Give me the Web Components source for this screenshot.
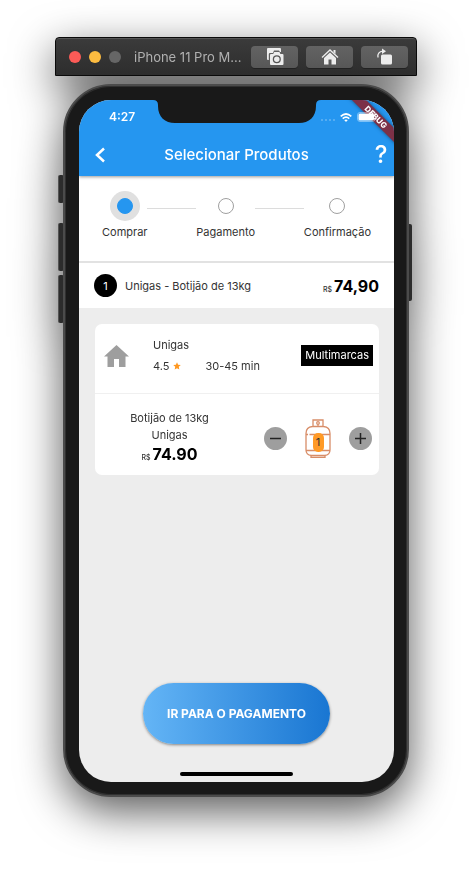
<!DOCTYPE html>
<html lang="pt-BR">
<head>
<meta charset="utf-8">
<meta name="viewport" content="width=device-width, initial-scale=1">
<title>Selecionar Produtos</title>
<style>
  body { margin: 0; background: #fff; font-family: Inter, Roboto, "Liberation Sans", sans-serif; font-size: 11px; line-height: 16px; color: #333; }
</style>
</head>
<body>
<sim-stage>
  <sim-toolbar>iPhone 11 Pro M...
    <sim-button slot="actions" label="Captura de tela"><svg width="18" height="18" viewBox="0 0 18 18"><path fill="#ececec" d="M2 0h12q1 0 1 1v3l-1 0-1-1.500H8L7 5H4q-1.200 0-1.200 1.200V12H2q-1 0-1-1V1q0-1 1-1z"/><path fill="#ececec" d="M5 6h2.200l1-2h5.200l1 2H16.500q1 0 1 1v9q0 1-1 1H5q-1 0-1-1V7q0-1 1-1z"/><circle cx="10.800" cy="11.300" r="3.400" fill="#ececec" stroke="#555" stroke-width="1.300"/></svg></sim-button>
    <sim-button slot="actions" label="Início"><svg width="18" height="18" viewBox="0 0 18 18"><path fill="none" stroke="#ececec" stroke-width="1.300" d="M1 9.500 9 2l8 7.500"/><path fill="#ececec" d="M12.500 2h2v4l-2-2zM9 4.500l6 5.500V16.500H10.500V11.500h-3v5H3V10z"/></svg></sim-button>
    <sim-button slot="actions" label="Girar"><svg width="18" height="18" viewBox="0 0 18 18"><rect x="5" y="6.500" width="11" height="10" rx="1.500" fill="#ececec"/><path fill="none" stroke="#ececec" stroke-width="1.300" d="M2 9.500Q1 4 7 3.200"/><path fill="#ececec" d="M6 .500 10 3.200 6 6z"/></svg></sim-button>
  </sim-toolbar>
  <phone-frame>
    <header-area>
      <status-bar>4:27</status-bar>
      <app-bar>Selecionar Produtos</app-bar>
    </header-area>
    <step-bar>
      <step-item active>Comprar</step-item>
      <step-line></step-line>
      <step-item>Pagamento</step-item>
      <step-line></step-line>
      <step-item>Confirmação</step-item>
    </step-bar>
    <order-line count="1">Unigas - Botijão de 13kg<price-tag slot="price">74,90</price-tag></order-line>
    <vendor-card>
      <vendor-head rating="4.5" time="30-45 min" tag="Multimarcas">Unigas</vendor-head>
      <vendor-product brand="Unigas">Botijão de 13kg
        <price-tag slot="price">74.90</price-tag>
        <quantity-picker slot="quantity" value="1"></quantity-picker>
      </vendor-product>
    </vendor-card>
    <checkout-button>IR PARA O PAGAMENTO</checkout-button>
    <home-indicator></home-indicator>
  </phone-frame>
</sim-stage>

<script>
const define = (name, markup) => {
  customElements.define(name, class extends HTMLElement {
    constructor() {
      super();
      const t = document.createElement('template');
      t.innerHTML = '<style>*{box-sizing:border-box}:host{box-sizing:border-box}button{font:inherit;border:0;padding:0;margin:0;background:none;cursor:pointer}svg{display:block}</style>' + markup;
      this.attachShadow({ mode: 'open' }).append(t.content.cloneNode(true));
    }
    connectedCallback() {
      this.shadowRoot.querySelectorAll('[data-text]').forEach(n => { n.textContent = this.getAttribute(n.dataset.text); });
      this.shadowRoot.querySelectorAll('[data-label]').forEach(n => n.setAttribute('aria-label', this.getAttribute(n.dataset.label)));
    }
  });
};

define('sim-stage', `<style>
  :host { display: flex; flex-direction: column; gap: 8px; min-height: 100vh; padding: 37px 55px 74px; overflow: hidden; filter: drop-shadow(0 14px 22px rgba(0,0,0,.66)); }
</style><slot></slot>`);

define('sim-toolbar', `<style>
  :host { display: flex; align-items: center; height: 39px; padding: 0 8px 0 13px; border: 1px solid #0a0a0a; border-radius: 4px 4px 0 0; background: linear-gradient(#3b3b3b, #2d2d2d); box-shadow: inset 0 1px #555; color: #b0b0b0; font-size: 13px; }
  .lights { display: flex; gap: 8px; margin-right: 13px; }
  .lights i { width: 12px; height: 12px; border-radius: 50%; background: #666; }
  .lights i:nth-child(1) { background: #fc5b57; }
  .lights i:nth-child(2) { background: #fdbc40; }
  .title { flex: 1; white-space: nowrap; }
  .actions { display: flex; gap: 8px; }
</style><div class="lights"><i></i><i></i><i></i></div><div class="title"><slot></slot></div><div class="actions"><slot name="actions"></slot></div>`);

define('sim-button', `<style>
  button { display: grid; place-items: center; width: 47px; height: 22px; border-radius: 4px; background: linear-gradient(#636363, #575757); box-shadow: 0 1px #222; }
</style><button data-label="label"><slot></slot></button>`);

define('phone-frame', `<style>
  :host { position: relative; display: flex; flex: 1; flex-direction: column; margin: 0 8px; padding: 14px 13px 13px 14px; border: 2px solid #4b4b4b; border-radius: 48px; background: #191919; box-shadow: inset 0 0 0 1px #303030; }
  .screen { position: relative; display: flex; flex: 1; flex-direction: column; overflow: hidden; border-radius: 32px; background: #ededed; }
  .key { position: absolute; width: 6px; background: #2c2c2c; border-left: 1px solid #555; border-radius: 2px; left: -7px; z-index: -1; }
  .mute { top: 89px; height: 28px; }
  .up { top: 137px; height: 48px; }
  .down { top: 189px; height: 48px; }
  .power { left: auto; right: -5px; top: 138px; height: 77px; }
</style><i class="key mute"></i><i class="key up"></i><i class="key down"></i><i class="key power"></i><main class="screen"><slot></slot></main>`);

define('header-area', `<style>
  :host { display: block; position: relative; z-index: 1; background: #2596f0; color: #fff; box-shadow: 0 1px 3px rgba(0,0,0,.4); }
</style><slot></slot>`);

define('status-bar', `<style>
  :host { position: relative; display: flex; align-items: center; justify-content: space-between; height: 34px; padding: 0 17px 0 30px; font-size: 12px; font-weight: 600; }
  .notch { position: absolute; top: 0; left: 50%; margin-left: -84px; }
  .ribbon { position: absolute; right: -42px; top: 12px; width: 120px; height: 10px; background: #7c3147; box-shadow: 0 0 4px rgba(0,0,0,.5); transform: rotate(45deg); font-size: 8px; font-weight: 800; line-height: 10px; text-align: center; }
  .status { position: relative; display: flex; align-items: center; gap: 5px; }
  .dots { display: flex; gap: 2px; padding-top: 6px; }
  .dots i { width: 2px; height: 2px; border-radius: 50%; background: rgba(255,255,255,.3); }
</style>
<svg class="notch" width="168" height="23" viewBox="0 0 168 23"><path fill="#191919" d="M0 0h168q-5 0-5 5v1c0 11-7 17-17 17H22C12 23 5 17 5 6V5q0-5-5-5z"/></svg>
<slot></slot>
<div class="ribbon">DEBUG</div>
<div class="status"><span class="dots"><i></i><i></i><i></i><i></i></span>
<svg width="12" height="9" viewBox="0 0 12 9"><g fill="none" stroke="#fff" stroke-width="1.700"><path d="M.700 3.300q5.300-4.600 10.600 0M2.700 5.600q3.300-2.800 6.600 0"/></g><path fill="#fff" d="M4.200 7.100q1.800-1.400 3.600 0L6 9z"/></svg>
<svg width="20" height="10" viewBox="0 0 20 10"><rect x=".500" y=".500" width="17.500" height="9" rx="2.500" fill="none" stroke="#fff" stroke-opacity=".4"/><rect x="1.500" y="1.500" width="15.500" height="7" rx="1.500" fill="#fff"/><path fill="#fff" fill-opacity=".5" d="M19 3.500q1 1.500 0 3z"/></svg></div>`);

define('app-bar', `<style>
  :host { display: grid; grid-template-columns: 42px 1fr 42px; align-items: center; height: 42px; font-size: 15px; font-weight: 500; line-height: 20px; text-align: center; }
  button { color: #fff; height: 32px; display: grid; place-items: center; }
  .help { justify-self: end; width: 26px; font-size: 24px; }
  h1 { margin: 0; font: inherit; }
</style><button aria-label="Voltar"><svg width="12" height="16" viewBox="0 0 12 16"><path fill="none" stroke="#fff" stroke-width="2.500" d="M10 1.500 3 8l7 6.500"/></svg></button><h1><slot></slot></h1><button class="help" aria-label="Ajuda">?</button>`);

define('step-bar', `<style>
  :host { display: flex; height: 87px; padding: 15px 23px 0; background: #fff; border-bottom: 2px solid #e2e2e2; }
</style><slot></slot>`);

define('step-item', `<style>
  :host { display: flex; flex-direction: column; align-items: center; gap: 3px; }
  .dot { width: 16px; height: 16px; margin: 7px; border: 1px solid #a0a0a0; border-radius: 50%; }
  :host([active]) .dot { background: #2596f0; border-color: #2596f0; box-shadow: 0 0 0 7px #e0e0e0; }
</style><i class="dot"></i><span><slot></slot></span>`);

define('step-line', `<style>
  :host { flex: 1; height: 1px; margin-top: 17px; background: #dcdcdc; }
</style>`);

define('order-line', `<style>
  :host { display: flex; align-items: center; gap: 8px; height: 45px; padding: 0 15px; background: #fff; }
  .count { display: grid; place-items: center; width: 23px; height: 23px; border-radius: 50%; background: #000; color: #fff; }
  .name { flex: 1; }
</style><span class="count" data-text="count"></span><span class="name"><slot></slot></span><slot name="price"></slot>`);

define('price-tag', `<style>
  :host { display: inline-flex; align-items: baseline; gap: 2px; color: #000; font-size: 16px; font-weight: 700; line-height: 20px; }
  small { color: #333; font-size: 7px; font-weight: 500; line-height: 8px; }
</style><small>R$</small><slot></slot>`);

define('vendor-card', `<style>
  :host { display: block; margin: 16px 15px 0 16px; border-radius: 7px; background: #fff; }
</style><slot></slot>`);

define('vendor-head', `<style>
  :host { display: grid; grid-template-columns: 49px 1fr auto; align-items: center; padding: 13px 6px 19px 9px; border-bottom: 1px solid #f0f0f0; }
  .info { display: grid; gap: 5px; }
  .meta { display: flex; align-items: center; }
  .meta svg { margin: 0 24px 0 4px; }
  .tag { padding: 2px 4px 3px; background: #000; color: #fff; }
</style><svg width="25" height="22" viewBox="0 0 25 22"><path fill="#9e9e9e" d="M12.500 0 25 11.500h-3.500V22H15V14h-5v8H3.500V11.500H0z"/></svg>
<div class="info"><span><slot></slot></span><div class="meta"><span data-text="rating"></span><svg width="8" height="8" viewBox="0 0 24 24"><path fill="#ff9820" d="m12 1 3.300 7.400 8 .800-6 5.400L19 22.500l-7-4.100-7 4.100 1.700-7.900-6-5.400 8-.800z"/></svg><span data-text="time"></span></div></div>
<span class="tag" data-text="tag"></span>`);

define('vendor-product', `<style>
  :host { display: grid; grid-template-columns: 1fr auto; align-items: start; gap: 20px; padding: 16px 7px 11px 0; }
  .info { display: flex; flex-direction: column; align-items: center; gap: 1px; }
</style><div class="info"><span><slot></slot></span><span data-text="brand"></span><slot name="price"></slot></div><slot name="quantity"></slot>`);

define('quantity-picker', `<style>
  :host { display: flex; align-items: center; gap: 18px; padding-top: 9px; }
  button { display: grid; place-items: center; width: 23px; height: 23px; border-radius: 50%; background: #9e9e9e; }
  .tank { display: grid; place-items: center; }
  .tank > * { grid-area: 1 / 1; }
  .value { position: relative; width: 11px; height: 19px; margin-top: 7px; border-radius: 5px; background: #ff9a26; line-height: 19px; text-align: center; }
</style><button aria-label="Diminuir"><svg width="11" height="11" viewBox="0 0 11 11"><path stroke="#222" stroke-width="1.500" d="M0 5.500h11"/></svg></button>
<span class="tank"><svg width="26" height="39" viewBox="0 0 26 39"><g fill="none" stroke="#d88d68" stroke-width="1.300"><path d="M8 7.500V1h10v6.500M1 31V14.500Q1 8 7.500 7.500h11Q25 8 25 14.500V31q0 5-5.500 5.500h-13Q1 36 1 31zM1 15.500h2m1.500 0H25M1 31.500h24M6 36.500v2h14v-2M13 7.500v-2"/><circle cx="13" cy="4" r="1.300"/></g></svg><span class="value" data-text="value"></span></span>
<button aria-label="Aumentar"><svg width="11" height="11" viewBox="0 0 11 11"><path stroke="#222" stroke-width="1.500" d="M0 5.500h11M5.500 0v11"/></svg></button>`);

define('checkout-button', `<style>
  :host { display: flex; justify-content: center; margin-top: auto; }
  button { height: 61px; padding: 0 24px; border-radius: 31px; background: linear-gradient(90deg, #64b5f6, #1976d2); box-shadow: 0 1px 3px rgba(0,0,0,.45); color: #fff; font-size: 12px; font-weight: 700; white-space: nowrap; }
</style><button><slot></slot></button>`);

define('home-indicator', `<style>
  :host { display: block; width: 113px; height: 4px; margin: 28px auto 6px; border-radius: 2px; background: #000; }
</style>`);
</script>
</body>
</html>
